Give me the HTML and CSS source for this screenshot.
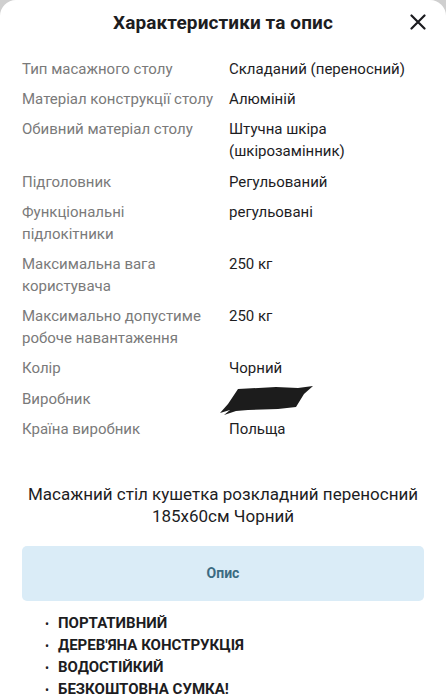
FILE: index.html
```html
<!DOCTYPE html>
<html lang="uk">
<head>
    <meta charset="UTF-8">
    <meta name="viewport" content="width=device-width, initial-scale=1.0">
    <title>Характеристики та опис</title>
    <link rel="stylesheet" href="styles.css">
</head>
<body>
<div class="sheet">
    <div class="sheet-header">
        <h1 class="sheet-title">Характеристики та опис</h1>
        <button class="closebtn" aria-label="Закрити">
            <svg width="16" height="16" viewBox="0 0 16 16"><path d="M1.5 1.5 L14.5 14.5 M14.5 1.5 L1.5 14.5" stroke="#1b1b1f" stroke-width="2.2" stroke-linecap="round"/></svg>
        </button>
    </div>

    <dl class="specs">
        <dt>Тип масажного столу</dt><dd>Складаний (переносний)</dd>
        <dt>Матеріал конструкції столу</dt><dd>Алюміній</dd>
        <dt>Обивний матеріал столу</dt><dd>Штучна шкіра<br>(шкірозамінник)</dd>
        <dt>Підголовник</dt><dd>Регульований</dd>
        <dt>Функціональні<br>підлокітники</dt><dd>регульовані</dd>
        <dt>Максимальна вага<br>користувача</dt><dd>250 кг</dd>
        <dt>Максимально допустиме<br>робоче навантаження</dt><dd>250 кг</dd>
        <dt>Колір</dt><dd>Чорний</dd>
        <dt>Виробник</dt>
        <dd class="hidden-value">
            <svg width="96" height="30" viewBox="0 0 96 30"><path d="M20 3 L58 1 L80 2 L95 0 L86 8 L78 21 L60 23 L30 24 L18 25 L6 29 L12 24 L2 27 L10 18 Z" fill="#1c1c1c"/></svg>
        </dd>
        <dt>Країна виробник</dt><dd>Польща</dd>
    </dl>

    <h2 class="product-name">Масажний стіл кушетка розкладний переносний 185x60см Чорний</h2>

    <button class="desc-btn">Опис</button>

    <ul class="features">
        <li>ПОРТАТИВНИЙ</li>
        <li>ДЕРЕВ'ЯНА КОНСТРУКЦІЯ</li>
        <li>ВОДОСТІЙКИЙ</li>
        <li>БЕЗКОШТОВНА СУМКА!</li>
    </ul>
</div>
</body>
</html>
```

FILE: styles.css
```css
:root {
    --text-color: #1d1d1f;
    --label-color: #7a7a7a;
    --btn-bg: #daecf7;
    --btn-text: #3b6b82;
}
body {
    margin: 0;
    font-family: Roboto, "Noto Sans", "Liberation Sans", sans-serif;
    color: var(--text-color);
    background-color: #cfcfcf;
    overflow: hidden;
}
.sheet {
    background-color: #fff;
    border-radius: 16px 16px 0 0;
    padding: 0 22px;
    min-height: 699px;
}
.sheet-header {
    position: relative;
    height: 44px;
    display: flex;
    align-items: center;
    justify-content: center;
}
.sheet-title {
    margin: 0;
    font-size: 19px;
    font-weight: 700;
    letter-spacing: 0.1px;
}
.closebtn {
    position: absolute;
    right: -2px;
    top: 14px;
    padding: 0;
    border: none;
    background: transparent;
    line-height: 0;
}
.specs {
    display: grid;
    grid-template-columns: 207px 1fr;
    row-gap: 8.2px;
    margin: 14px 0 0;
    font-size: 15px;
    line-height: 22px;
}
.specs dt {
    color: var(--label-color);
}
.specs dd {
    margin: 0;
}
.hidden-value {
    height: 22px;
    position: relative;
}
.hidden-value svg {
    position: absolute;
    left: -11px;
    top: -2px;
}
.product-name {
    margin: 43px 0 0;
    font-size: 17px;
    font-weight: 400;
    line-height: 22px;
    text-align: center;
}
.desc-btn {
    display: block;
    width: 100%;
    height: 55px;
    margin-top: 19px;
    border: none;
    border-radius: 5px;
    background-color: var(--btn-bg);
    color: var(--btn-text);
    font-family: inherit;
    font-size: 14px;
    font-weight: 700;
}
.features {
    margin: 12px 0 0;
    padding-left: 36px;
    font-size: 15px;
    font-weight: 700;
    line-height: 21px;
    list-style: none;
}
.features li::before {
    content: "•";
    display: inline-block;
    width: 13px;
    margin-left: -13px;
    font-size: 12px;
    font-weight: 400;
}
```
